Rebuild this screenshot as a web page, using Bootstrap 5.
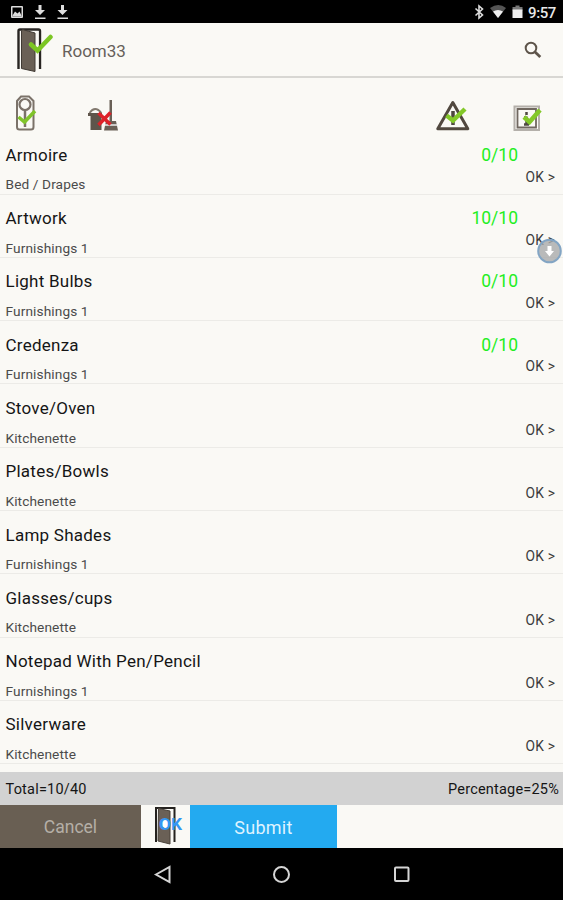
<!DOCTYPE html>
<html lang="en">
<head>
<meta charset="utf-8">
<meta name="viewport" content="width=device-width, initial-scale=1">
<title>Room33</title>
<link href="https://cdn.jsdelivr.net/npm/bootstrap@5.3.0/dist/css/bootstrap.min.css" rel="stylesheet">
<style>
body{font-family:Roboto,"Liberation Sans",sans-serif;background:#faf9f5;color:#151515;height:900px;line-height:1}
svg{display:block;flex:none}
.status{height:23px;padding:0 7px 0 10px}
.clock{color:#e8e8e8;font-weight:500;font-size:15px;letter-spacing:-.4px;padding-top:3px}
.appbar{height:55px;border-bottom:2px solid #d8d7d3;padding:0 20px 0 16px}
.appbar h1{font-size:17px;color:#66605a;padding:3px 0 0 1px}
.tools{height:53.3px;padding:17px 21px 0 14px}
.safe-icon{margin-left:42px}
.item{height:63.3px;border-bottom:1px solid #ecebe7;padding:0 8px 0 5.5px}
.name{font-size:17px;line-height:20px;margin-top:13.5px;letter-spacing:.25px}
.group{font-size:13.7px;line-height:16px;margin-top:11.600px;color:#4b4b4b;letter-spacing:.1px}
.score{font-size:17.5px;line-height:20px;margin:13.5px 37px 0 0;color:#22ee22}
.state{font-size:13.8px;line-height:16px;margin-top:3.800px;color:#3c3c3c;letter-spacing:.15px}
.bubble{left:536px;top:238px}
.totals{height:33.5px;background:#d2d2d2;padding:4px 4px 0 5.5px;font-size:14.5px;letter-spacing:.2px;margin-top:7.7px}
.actions{height:42.5px}
.actions .btn{font-size:18px;line-height:1;padding:3px 0 0}
.actions .cancel{width:141px;background:#695f53;color:#b5afa7;font-size:17.5px}
.submit{width:147px;background:#23aaf0;color:#dff3ff;letter-spacing:.25px}
.door{width:49px;padding-left:13px}
.ok-mark{font-size:16.5px;font-weight:700}
.navkeys{height:52px}
</style>
<script src="https://cdn.jsdelivr.net/npm/bootstrap@5.3.0/dist/js/bootstrap.bundle.min.js"></script>
</head>
<body class="position-relative overflow-hidden d-flex flex-column">
<div class="status bg-black d-flex align-items-center justify-content-between flex-shrink-0">
  <div class="d-flex align-items-center">
    <svg width="62" height="23" viewBox="0 0 62 23" fill="#ddd"><path fill-rule="evenodd" d="M2 6h10q1 0 1 1v10q0 1-1 1H2q-1 0-1-1V7q0-1 1-1zm.5 1.500v9h9v-9z"/><path d="M2.500 15.500l2.500-4 2.500 2 2-2 2 4v1h-9z"/><path d="M28.500 5h3v5h3.500l-5 5-5-5h3.500zM25 17.500h10.500V19H25zM51 5h3v5h3.500l-5 5-5-5H51zM47.500 17.500H58V19H47.500z"/></svg>
  </div>
  <div class="d-flex align-items-center">
    <svg width="54" height="23" viewBox="474 0 54 23"><path d="M475.500 8.500l7 6.500-3.500 3V6l3.500 3-7 6.500" fill="none" stroke="#ddd" stroke-width="1.600"/><path d="M490 8q8.500-6 16 0l-8 10z" fill="#555"/><path d="M493 11.500q5-3 10 0L498 18z" fill="#eee"/><path d="M512.500 7h3V5.500h4V7h3v3.500h-10z" fill="#777"/><path d="M512.500 9.500h10V18h-10z" fill="#eee"/></svg>
    <span class="clock">9:57</span>
  </div>
</div>
<header class="appbar d-flex align-items-center flex-shrink-0">
  <svg width="37" height="46" viewBox="16 27 37 46"><path d="M18.500 69V31q0-1.500 1.500-1.500h18.500q1.500 0 1.500 1.500v38" fill="none" stroke="#282522" stroke-width="2.400"/><path d="M20 31h18.500v38H20z" fill="#faf9f5"/><path d="M22.500 29.500L35 33V71.500L21.500 68.500V31z" fill="#6a6056" stroke="#403a34"/><path d="M31 44.500l6.500 6L50.500 37" fill="none" stroke="#7cc623" stroke-width="4.500" stroke-linecap="round"/></svg>
  <h1 class="mb-0 ms-2 me-auto fw-normal">Room33</h1>
  <svg width="19" height="19" viewBox="524 40.500 19 19" fill="none" stroke="#5e554b"><circle cx="531" cy="48.500" r="5.300" stroke-width="2"/><path d="M534.500 52l5.800 5.500" stroke-width="2.800"/></svg>
</header>
<div class="tools d-flex align-items-start flex-shrink-0">
  <svg width="24" height="37" viewBox="14 95 24 37" fill="none" stroke="#7b7269"><path d="M17 101l4-4.500h8l4.500 4.500v26q0 2.500-2.500 2.500h-11.500q-2.500 0-2.500-2.500z" stroke-width="2"/><circle cx="25" cy="104.500" r="5.500" stroke-width="2.200"/><path d="M25 110v17" stroke-width="2.500"/><path d="M18.500 117l6 5L35 111" stroke="#80c42a" stroke-width="3.500"/></svg>
  <svg class="ms-5" width="34" height="37" viewBox="86 95 34 37"><path d="M89.500 113q5.500-8 12 0" fill="none" stroke="#82796f" stroke-width="1.800"/><path d="M88 113h14v3h-.5v14h-11v-14H88z" fill="#5e554b"/><path d="M109.500 100h2.500v21h4l2 9.500h-14l2-9.500h3.500z" fill="#696056"/><path d="M105 125h13" stroke="#eee" stroke-width="1.500"/><path d="M98.500 113l12 11.500M110.500 112.500L98.500 125" stroke="#dd2229" stroke-width="3.500"/></svg>
  <svg class="ms-auto" width="36" height="37" viewBox="435 95 36 37" fill="none"><path d="M452.800 102.500l15 26.300h-30z" stroke="#51483f" stroke-width="3" stroke-linejoin="round"/><path d="M453 111v8m0 2.500v3.500" stroke="#4d463f" stroke-width="3.500"/><path d="M446.500 115.500l6.500 5 12-11.500" stroke="#83c829" stroke-width="4.500"/></svg>
  <svg class="safe-icon" width="29" height="37" viewBox="513 95 29 37" fill="none"><path d="M514.500 106.500H539V130h-24.500z" stroke="#b4b0aa" stroke-width="2"/><path d="M517.500 109H536v18.500h-18.500z" stroke="#706860" stroke-width="1.800"/><path d="M526.500 112v3m0 1.500v8m-2.500 0h5m-5-7h2" stroke="#4f4841" stroke-width="2.500"/><path d="M524 117l5.500 5L540 110" stroke="#83c829" stroke-width="4.500"/></svg>
</div>
<main class="flex-shrink-0">
  <div class="item d-flex justify-content-between"><div><div class="name">Armoire</div><div class="group">Bed / Drapes</div></div><div class="text-end"><div class="score">0/10</div><div class="state">OK &gt;</div></div></div>
  <div class="item d-flex justify-content-between"><div><div class="name">Artwork</div><div class="group">Furnishings 1</div></div><div class="text-end"><div class="score">10/10</div><div class="state">OK &gt;</div></div></div>
  <div class="item d-flex justify-content-between"><div><div class="name">Light Bulbs</div><div class="group">Furnishings 1</div></div><div class="text-end"><div class="score">0/10</div><div class="state">OK &gt;</div></div></div>
  <div class="item d-flex justify-content-between"><div><div class="name">Credenza</div><div class="group">Furnishings 1</div></div><div class="text-end"><div class="score">0/10</div><div class="state">OK &gt;</div></div></div>
  <div class="item d-flex justify-content-between"><div><div class="name">Stove/Oven</div><div class="group">Kitchenette</div></div><div class="text-end"><div class="score">&nbsp;</div><div class="state">OK &gt;</div></div></div>
  <div class="item d-flex justify-content-between"><div><div class="name">Plates/Bowls</div><div class="group">Kitchenette</div></div><div class="text-end"><div class="score">&nbsp;</div><div class="state">OK &gt;</div></div></div>
  <div class="item d-flex justify-content-between"><div><div class="name">Lamp Shades</div><div class="group">Furnishings 1</div></div><div class="text-end"><div class="score">&nbsp;</div><div class="state">OK &gt;</div></div></div>
  <div class="item d-flex justify-content-between"><div><div class="name">Glasses/cups</div><div class="group">Kitchenette</div></div><div class="text-end"><div class="score">&nbsp;</div><div class="state">OK &gt;</div></div></div>
  <div class="item d-flex justify-content-between"><div><div class="name">Notepad With Pen/Pencil</div><div class="group">Furnishings 1</div></div><div class="text-end"><div class="score">&nbsp;</div><div class="state">OK &gt;</div></div></div>
  <div class="item d-flex justify-content-between"><div><div class="name">Silverware</div><div class="group">Kitchenette</div></div><div class="text-end"><div class="score">&nbsp;</div><div class="state">OK &gt;</div></div></div>
</main>
<div class="totals d-flex align-items-center justify-content-between flex-shrink-0"><span>Total=10/40</span><span>Percentage=25%</span></div>
<div class="actions d-flex flex-shrink-0">
  <button class="btn cancel rounded-0 border-0">Cancel</button>
  <div class="door"><svg width="30" height="42" viewBox="155 805 30 42"><path d="M157 842V808h18.500v34" fill="none" stroke="#25221f" stroke-width="2"/><path d="M159.500 808.500L171 811v33l-12-3z" fill="#6a6056" stroke="#4a433b"/><circle cx="166.500" cy="823.500" r="4.500" fill="#fff"/><text class="ok-mark" x="160" y="829.500" textLength="23" lengthAdjust="spacingAndGlyphs" fill="#3297f4">OK</text></svg></div>
  <button class="btn submit rounded-0 border-0">Submit</button>
</div>
<nav class="navkeys bg-black flex-shrink-0">
  <svg width="563" height="52" viewBox="0 848 563 52" fill="none" stroke="#d5d5d5" stroke-width="2"><path d="M156 874.500l13.500-7.500v15z"/><circle cx="281.500" cy="874.500" r="7.500"/><rect x="395" y="867.500" width="13.500" height="13.500" rx="1"/></svg>
</nav>
<svg class="bubble position-absolute" width="27" height="27" viewBox="0 0 27 27"><circle cx="13.500" cy="13" r="11.300" fill="#a9aaab" fill-opacity=".8" stroke="#83a5c4" stroke-width="2"/><path d="M11.500 8h4v5H18l-4.500 5.500L9 13h2.500z" fill="#fff"/></svg>
</body>
</html>
